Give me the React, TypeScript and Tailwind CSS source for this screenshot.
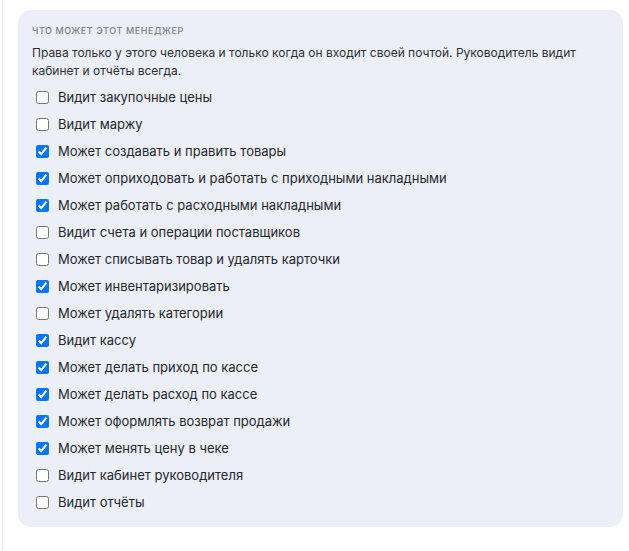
import React from "react";

const items: [string, boolean][] = [
  ["Видит закупочные цены", false],
  ["Видит маржу", false],
  ["Может создавать и править товары", true],
  ["Может оприходовать и работать с приходными накладными", true],
  ["Может работать с расходными накладными", true],
  ["Видит счета и операции поставщиков", false],
  ["Может списывать товар и удалять карточки", false],
  ["Может инвентаризировать", true],
  ["Может удалять категории", false],
  ["Видит кассу", true],
  ["Может делать приход по кассе", true],
  ["Может делать расход по кассе", true],
  ["Может оформлять возврат продажи", true],
  ["Может менять цену в чеке", true],
  ["Видит кабинет руководителя", false],
  ["Видит отчёты", false],
];

export default function App() {
  return (
    <div className="min-h-[551px] w-[629px] bg-white" style={{ fontFamily: "Inter, 'Noto Sans', sans-serif" }}>
      <div className="ml-[2px] border-l border-[#eef0f3] pl-[15px] pr-[6px] pt-[10px] min-h-[551px]">
        <div className="rounded-[13px] bg-[#eceef8] pl-[14px] pr-[14px] pt-[14px] pb-[11px]">
          <div className="text-[9px] leading-[14px] font-medium uppercase tracking-[0.063em] text-[#7d808c]">
            Что может этот менеджер
          </div>
          <p className="mt-[6px] text-[12px] leading-[18px] text-[#2e3038]">
            Права только у этого человека и только когда он входит своей почтой. Руководитель видит кабинет и отчёты всегда.
          </p>
          <div className="mt-[4px] flex flex-col">
            {items.map(([label, checked]) => (
              <label key={label} className="flex h-[27px] items-center text-[13px] text-[#26282e]">
                <input type="checkbox" defaultChecked={checked} className="m-0 ml-[4px] mr-[9px] h-[13px] w-[13px]" />
                <span>{label}</span>
              </label>
            ))}
          </div>
        </div>
      </div>
    </div>
  );
}
